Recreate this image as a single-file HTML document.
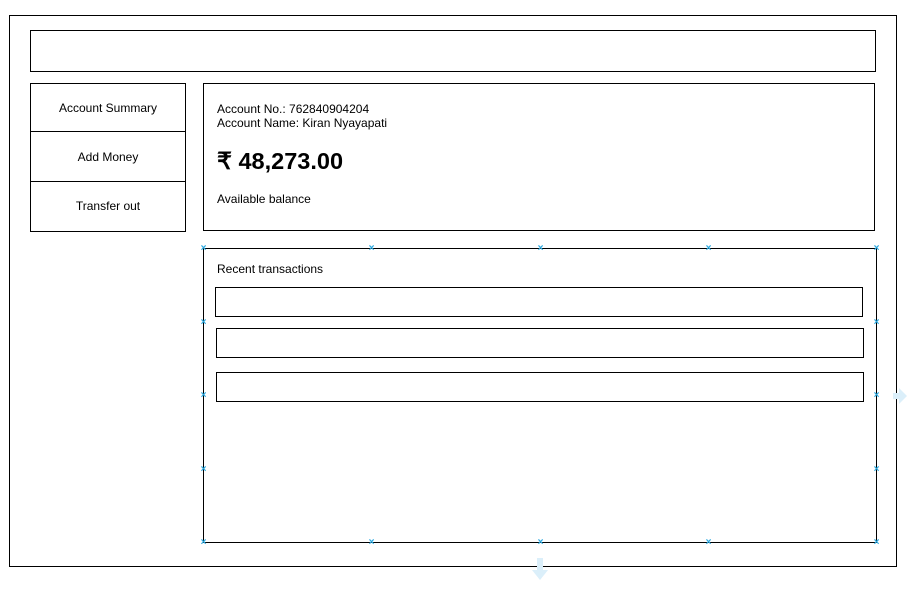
<!DOCTYPE html><html><head><style>
body{margin:0;width:907px;height:591px;background:#fff;position:relative;font-family:"Liberation Sans",sans-serif;overflow:hidden}
.b{position:absolute;border:1px solid #000;box-sizing:border-box}
.t{position:absolute;font-size:12px;color:#000}
.x{position:absolute;color:#29a8e0;font-size:10px;line-height:9px;width:9px;text-align:center;font-weight:bold}
</style></head><body>
<div class="b" style="left:9px;top:15px;width:888px;height:552px"></div>
<div class="b" style="left:30px;top:30px;width:846px;height:42px"></div>
<div class="b" style="left:30px;top:83px;width:156px;height:149px"></div>
<div style="position:absolute;left:30px;top:131px;width:156px;height:1px;background:#000"></div>
<div style="position:absolute;left:30px;top:181px;width:156px;height:1px;background:#000"></div>
<div class="t" style="left:30px;width:156px;text-align:center;top:101px">Account Summary</div>
<div class="t" style="left:30px;width:156px;text-align:center;top:150px">Add Money</div>
<div class="t" style="left:30px;width:156px;text-align:center;top:199px">Transfer out</div>
<div class="b" style="left:203px;top:83px;width:672px;height:148px"></div>
<div class="t" style="left:217px;top:102px;line-height:14px">Account No.: 762840904204<br>Account Name: Kiran Nyayapati</div>
<div class="t" style="left:217px;top:147px;font-size:23.5px;font-weight:bold">₹ 48,273.00</div>
<div class="t" style="left:217px;top:192px">Available balance</div>
<div class="b" style="left:203px;top:248px;width:674px;height:295px"></div>
<div class="t" style="left:217px;top:262px">Recent transactions</div>
<div class="b" style="left:215px;top:287px;width:648px;height:30px"></div>
<div class="b" style="left:216px;top:328px;width:648px;height:30px"></div>
<div class="b" style="left:216px;top:372px;width:648px;height:30px"></div>
<div class="x" style="left:199px;top:244px">×</div><div class="x" style="left:367px;top:244px">×</div><div class="x" style="left:536px;top:244px">×</div><div class="x" style="left:704px;top:244px">×</div><div class="x" style="left:872px;top:244px">×</div>
<div class="x" style="left:199px;top:538px">×</div><div class="x" style="left:367px;top:538px">×</div><div class="x" style="left:536px;top:538px">×</div><div class="x" style="left:704px;top:538px">×</div><div class="x" style="left:872px;top:538px">×</div>
<div class="x" style="left:199px;top:318px">×</div><div class="x" style="left:199px;top:391px">×</div><div class="x" style="left:199px;top:465px">×</div>
<div class="x" style="left:872px;top:318px">×</div><div class="x" style="left:872px;top:391px">×</div><div class="x" style="left:872px;top:465px">×</div>
<svg style="position:absolute;left:532px;top:558px" width="16" height="24"><path d="M5 0h6v12h5l-8 10-8-10h5z" fill="#dbeffa"/></svg>
<svg style="position:absolute;left:893px;top:388px" width="14" height="16"><path d="M0 5h6V0l8 8-8 8v-5H0z" fill="#dbeffa"/></svg>
</body></html>
